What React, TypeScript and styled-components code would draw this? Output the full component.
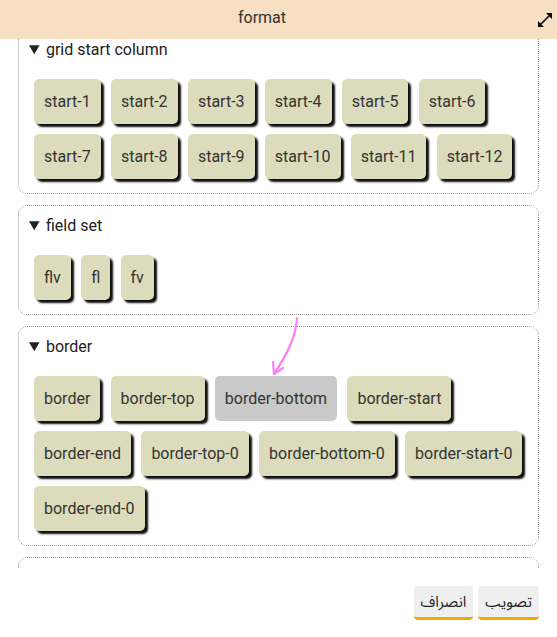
import React, { useLayoutEffect, useRef } from "react";
import styled, { createGlobalStyle } from "styled-components";

const GlobalStyle = createGlobalStyle`
  html, body { margin: 0; padding: 0; background: #fff; }
  body { font-family: Roboto, "DejaVu Sans", sans-serif; }
`;

const Dialog = styled.div`
  position: relative;
  width: 557px;
  height: 637px;
  display: flex;
  flex-direction: column;
  background: #fff;
  overflow: hidden;
`;

const TitleBar = styled.div`
  flex: 0 0 39px;
  display: flex;
  align-items: center;
  background: #f6dfc2;
  padding: 0 4px 4px 0;
  box-sizing: border-box;
`;

const Title = styled.div`
  flex: 1;
  text-align: center;
  padding-right: 13px;
  font-size: 16px;
  color: #333;
`;

const IconButton = styled.button`
  border: 0;
  background: none;
  padding: 0;
  margin-top: 5px;
  width: 16px;
  height: 16px;
  display: flex;
  align-items: center;
  justify-content: center;
  cursor: pointer;
`;

const Scroll = styled.div`
  flex: 1;
  overflow-y: auto;
  scrollbar-width: none;
  padding: 10px 18px 0 18px;
  &::-webkit-scrollbar { display: none; }
`;

const Group = styled.details`
  border: 1px dotted #999;
  border-radius: 9px;
  padding: 10px 10px 9px 10px;
  margin-bottom: 11px;
`;

const Summary = styled.summary`
  font-size: 16px;
  line-height: 20px;
  color: #222;
  cursor: pointer;
  margin-bottom: 14px;
`;

const Row = styled.div`
  display: flex;
  flex-wrap: wrap;
`;

const Chip = styled.button<{ $active?: boolean }>`
  height: 45px;
  margin: 5px 5.3px 5px 5px;
  padding: 0 10px;
  border: 0;
  border-radius: 5px;
  font-family: Roboto, sans-serif;
  font-size: 16px;
  color: #333;
  background: ${(p) => (p.$active ? "#c9c9c9" : "#dcdcbc")};
  box-shadow: ${(p) => (p.$active ? "none" : "3px 3px 2px rgba(0,0,0,0.95)")};
  cursor: pointer;
`;

const Footer = styled.div`
  flex: 0 0 69px;
  display: flex;
  flex-direction: row-reverse;
  align-items: flex-start;
  gap: 5px;
  padding: 18px 18px 0 18px;
  box-sizing: border-box;
`;

const FooterButton = styled.button`
  height: 34px;
  padding: 0 7px;
  border: 0;
  border-bottom: 3px solid #f6a800;
  border-radius: 4px;
  background: #efefef;
  font-family: "Noto Sans Arabic", "Noto Naskh Arabic", "DejaVu Sans", sans-serif;
  font-size: 15px;
  color: #222;
  cursor: pointer;
`;

const Annotation = styled.svg`
  position: absolute;
  left: 262px;
  top: 312px;
  pointer-events: none;
`;

const groups: { title: string; items: string[]; active?: string; open: boolean }[] = [
  {
    title: "grid start column",
    items: Array.from({ length: 12 }, (_, i) => `start-${i + 1}`),
    open: true,
  },
  { title: "field set", items: ["flv", "fl", "fv"], open: true },
  {
    title: "border",
    items: [
      "border",
      "border-top",
      "border-bottom",
      "border-start",
      "border-end",
      "border-top-0",
      "border-bottom-0",
      "border-start-0",
      "border-end-0",
    ],
    active: "border-bottom",
    open: true,
  },
  { title: "margin", items: [], open: false },
];

export default function App() {
  const scrollRef = useRef<HTMLDivElement>(null);
  useLayoutEffect(() => {
    if (scrollRef.current) scrollRef.current.scrollTop = 20;
  }, []);

  return (
    <>
      <GlobalStyle />
      <Dialog>
        <TitleBar>
          <Title>format</Title>
          <IconButton aria-label="expand">
            <svg width="16" height="16" viewBox="0 0 16 16">
              <line x1="3" y1="13" x2="13" y2="3" stroke="#000" strokeWidth="1.6" />
              <polygon points="15,1 15,7 9,1" fill="#000" />
              <polygon points="1,15 1,9 7,15" fill="#000" />
            </svg>
          </IconButton>
        </TitleBar>
        <Scroll ref={scrollRef}>
          {groups.map((g) => (
            <Group key={g.title} open={g.open}>
              <Summary>{g.title}</Summary>
              {g.open && (
                <Row>
                  {g.items.map((it) => (
                    <Chip key={it} $active={it === g.active}>
                      {it}
                    </Chip>
                  ))}
                </Row>
              )}
            </Group>
          ))}
        </Scroll>
        <Footer>
          <FooterButton>تصویب</FooterButton>
          <FooterButton>انصراف</FooterButton>
        </Footer>
        <Annotation width="44" height="70" viewBox="0 0 44 70">
          <path
            d="M35 6 C 34 22, 28 38, 12 62"
            fill="none"
            stroke="#fb80f6"
            strokeWidth="2.2"
            strokeLinecap="round"
          />
          <path
            d="M11 50 L 12 62 L 21 56"
            fill="none"
            stroke="#fb80f6"
            strokeWidth="2.2"
            strokeLinecap="round"
            strokeLinejoin="round"
          />
        </Annotation>
      </Dialog>
    </>
  );
}
